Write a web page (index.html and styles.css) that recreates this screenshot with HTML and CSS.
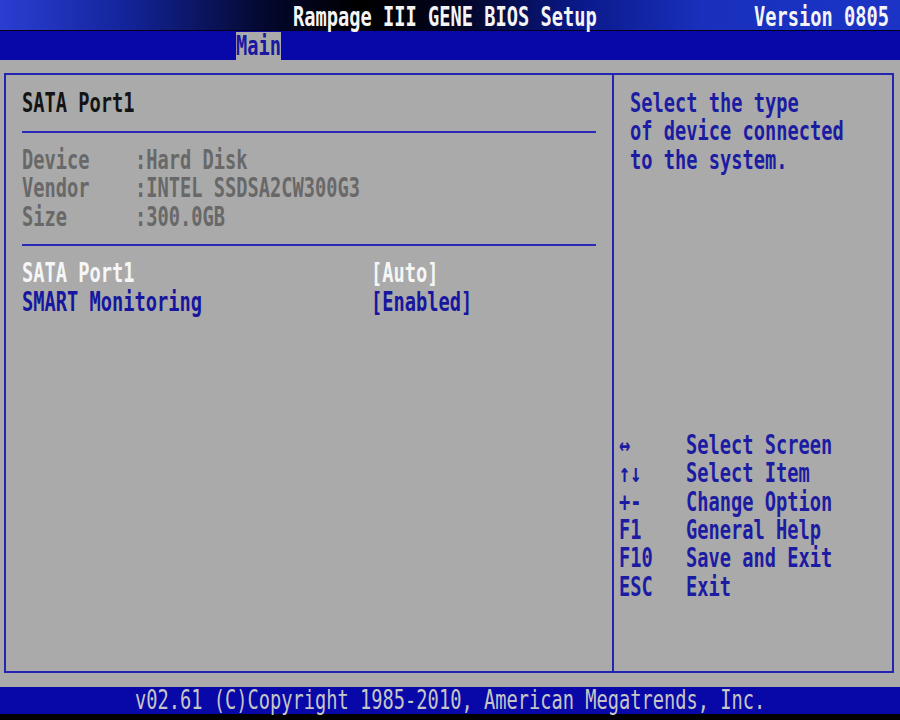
FILE: index.html
```html
<!doctype html>
<html lang="en">
<head>
  <meta charset="UTF-8" />
  <title>Rampage III GENE BIOS Setup</title>
  <link rel="stylesheet" href="styles.css">
</head>
<body>
  <div class="screen">
    <header class="topbar">
      <span class="title"><span class="t">Rampage III GENE BIOS Setup</span></span>
      <span class="version"><span class="t">Version 0805</span></span>
    </header>

    <nav class="tabs">
      <span class="tab active"><span class="t">Main</span></span>
    </nav>

    <main class="workspace">
      <div class="frame">
        <section class="settings">
          <div class="line heading"><span class="t">SATA Port1</span></div>
          <div class="rule"></div>

          <div class="line info">
            <span class="label"><span class="t">Device</span></span>
            <span class="t">:Hard Disk</span>
          </div>
          <div class="line info">
            <span class="label"><span class="t">Vendor</span></span>
            <span class="t">:INTEL SSDSA2CW300G3</span>
          </div>
          <div class="line info">
            <span class="label"><span class="t">Size</span></span>
            <span class="t">:300.0GB</span>
          </div>
          <div class="rule"></div>

          <div class="line option selected">
            <span class="item-name"><span class="t">SATA Port1</span></span>
            <span class="t">[Auto]</span>
          </div>
          <div class="line option">
            <span class="item-name"><span class="t">SMART Monitoring</span></span>
            <span class="t">[Enabled]</span>
          </div>
        </section>

        <aside class="help">
          <div class="line"><span class="t">Select the type</span></div>
          <div class="line"><span class="t">of device connected</span></div>
          <div class="line"><span class="t">to the system.</span></div>

          <div class="keys">
            <div class="line">
              <span class="key"><span class="t">↔</span></span>
              <span class="t">Select Screen</span>
            </div>
            <div class="line">
              <span class="key"><span class="t">↑↓</span></span>
              <span class="t">Select Item</span>
            </div>
            <div class="line">
              <span class="key"><span class="t">+-</span></span>
              <span class="t">Change Option</span>
            </div>
            <div class="line">
              <span class="key"><span class="t">F1</span></span>
              <span class="t">General Help</span>
            </div>
            <div class="line">
              <span class="key"><span class="t">F10</span></span>
              <span class="t">Save and Exit</span>
            </div>
            <div class="line">
              <span class="key"><span class="t">ESC</span></span>
              <span class="t">Exit</span>
            </div>
          </div>
        </aside>
      </div>
    </main>

    <footer class="footer">
      <span class="t">v02.61 (C)Copyright 1985-2010, American Megatrends, Inc.</span>
    </footer>
  </div>
</body>
</html>
```

FILE: styles.css
```css
* {
  box-sizing: border-box;
  margin: 0;
  padding: 0;
}

body {
  background: #000;
  font-family: "DejaVu Sans Mono", "Liberation Mono", monospace;
  font-size: 26px;
  font-weight: bold;
  line-height: 28.4px;
}

/* 80 x 25 text screen: one column is 11.25px, one row 28.4px */
.screen {
  width: 900px;
  height: 720px;
  background: #000;
  display: flex;
  flex-direction: column;
  overflow: hidden;
}

/* squeeze the glyphs into the narrow BIOS cell */
.t {
  display: inline-block;
  white-space: pre;
  transform: scaleX(0.719);
  transform-origin: 0 50%;
}

.topbar {
  flex: none;
  height: 31px;
  display: flex;
  padding: 3px 0 0 292.5px;
  color: #f4f4f4;
  border-bottom: 1px solid #00001c;
  background: linear-gradient(90deg, #2a3ed2 0%, #13249a 14%, #03072a 30%, #000 40%, #02041c 50%, #0a1888 64%, #1830bc 78%, #1c34c6 100%);
}

.title {
  flex: none;
  width: 461.25px;
}

.tabs {
  flex: none;
  height: 29px;
  display: flex;
  padding-left: 236.25px;
  background: #0808a8;
}

.tab {
  width: 45px;
  height: 28px;
  margin-top: 1px;
  color: #0808a8;
}

.tab.active {
  background: #aaaaaa;
  color: #1818a0;
}

.workspace {
  flex: none;
  height: 627px;
  padding: 13px 0 0 4px;
  background: #aaaaaa;
}

.frame {
  width: 890px;
  height: 600px;
  display: flex;
  border: 2px solid #2424b2;
}

.line {
  height: 28.4px;
  display: flex;
  white-space: pre;
}

.rule {
  height: 28.4px;
  display: flex;
  align-items: center;
}

.rule::before {
  content: "";
  flex: 1;
  height: 2px;
  background: #2a2ab6;
}

.settings {
  flex: none;
  width: 608px;
  padding: 14px 16px 0;
  border-right: 2px solid #2424b2;
}

.heading {
  color: #141414;
}

.info {
  color: #686868;
}

.label {
  flex: none;
  width: 112.5px;
}

.option {
  color: #16169e;
}

.option.selected {
  color: #f6f6f6;
}

.item-name {
  flex: none;
  width: 348.75px;
}

.help {
  flex: 1;
  padding: 14px 0 0 16px;
  color: #1c1ca2;
}

.keys {
  margin: 256.6px 0 0 -11.25px;
}

.key {
  flex: none;
  width: 67.5px;
}

.footer {
  flex: none;
  height: 27px;
  padding-left: 135px;
  line-height: 27px;
  font-weight: normal;
  background: #0808a8;
  color: #c6c6c6;
}
```
